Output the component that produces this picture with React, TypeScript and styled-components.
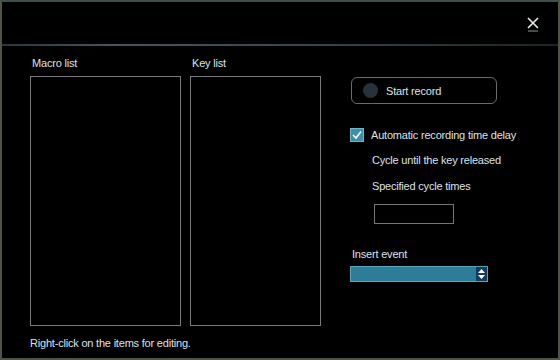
import styled, { createGlobalStyle } from "styled-components";

const GlobalStyle = createGlobalStyle`
  html, body {
    margin: 0;
    padding: 0;
    background: #000;
  }
  body {
    font-family: "Liberation Sans", Arial, sans-serif;
  }
`;

const Window = styled.div`
  box-sizing: border-box;
  width: 560px;
  height: 360px;
  background: #000;
  border: 2px solid #4e5546;
  border-top-color: #3f4c48;
  display: flex;
  flex-direction: column;
  color: #dbe3e8;
  font-size: 11px;
  letter-spacing: -0.2px;
`;

const TitleBar = styled.div`
  height: 42px;
  display: flex;
  justify-content: flex-end;
  align-items: center;
  padding-right: 17px;
  border-bottom: 2px solid transparent;
  border-image: linear-gradient(90deg, #24393c 0%, #3e5a5f 20%, #35494c 55%, #1b2426 100%) 1;
`;

const CloseButton = styled.button`
  width: 16px;
  height: 18px;
  padding: 0;
  border: none;
  background: transparent;
  display: flex;
  align-items: center;
  justify-content: center;
  margin-top: 2px;
`;

const Body = styled.div`
  flex: 1;
  display: flex;
  padding: 11px 0 0 28px;
`;

const Lists = styled.div`
  display: flex;
  flex-direction: column;
`;

const ListRow = styled.div`
  display: flex;
  gap: 9px;
`;

const ListColumn = styled.div<{ $width: number }>`
  display: flex;
  flex-direction: column;
  width: ${(p) => p.$width}px;
`;

const Label = styled.div`
  height: 13px;
  line-height: 13px;
  padding-left: 2px;
  margin-bottom: 6px;
`;

const ListBox = styled.div`
  box-sizing: border-box;
  height: 250px;
  border: 1px solid #7a7a7a;
`;

const Hint = styled.div`
  margin-top: 10px;
  line-height: 14px;
`;

const Side = styled.div`
  display: flex;
  flex-direction: column;
  padding: 20px 0 0 29px;
`;

const RecordButton = styled.button`
  box-sizing: border-box;
  width: 146px;
  height: 27px;
  margin-left: 1px;
  border: 1px solid #6b6b6b;
  border-radius: 6px;
  background: #000;
  display: flex;
  align-items: center;
  gap: 8px;
  padding: 0 0 0 11px;
  color: #dbe3e8;
  font: inherit;
  letter-spacing: inherit;
`;

const Dot = styled.span`
  width: 15px;
  height: 15px;
  border-radius: 50%;
  background: #27333a;
`;

const CheckRow = styled.label`
  display: flex;
  align-items: center;
  gap: 7px;
  margin-top: 24px;
`;

const CheckBox = styled.span`
  box-sizing: border-box;
  width: 14px;
  height: 14px;
  background: #3c8fa6;
  border: 1px solid #6fb6c8;
  display: flex;
  align-items: center;
  justify-content: center;
`;

const Option = styled.div<{ $top: number }>`
  margin-top: ${(p) => p.$top}px;
  padding-left: 22px;
  line-height: 14px;
`;

const CountInput = styled.div`
  box-sizing: border-box;
  width: 80px;
  height: 20px;
  margin: 11px 0 0 24px;
  border: 1px solid #767676;
`;

const SelectLabel = styled.div`
  margin-top: 23px;
  padding-left: 2px;
  line-height: 14px;
`;

const Select = styled.div`
  box-sizing: border-box;
  width: 138px;
  height: 16px;
  margin-top: 5px;
  background: #2e7d98;
  border: 1px solid #5aa3b9;
  display: flex;
  justify-content: flex-end;
`;

const Spinner = styled.span`
  width: 11px;
  height: 14px;
  background: #163a5c;
  display: flex;
  align-items: center;
  justify-content: center;
`;

export default function App() {
  return (
    <>
      <GlobalStyle />
      <Window>
        <TitleBar>
          <CloseButton aria-label="Close">
            <svg width="14" height="16" viewBox="0 0 14 16">
              <path d="M2 2 L12 12 M12 2 L2 12" stroke="#e8eef0" strokeWidth="1.6" />
              <path d="M2 15 H12" stroke="#8a9598" strokeWidth="1" />
            </svg>
          </CloseButton>
        </TitleBar>
        <Body>
          <Lists>
            <ListRow>
              <ListColumn $width={151}>
                <Label>Macro list</Label>
                <ListBox />
              </ListColumn>
              <ListColumn $width={131}>
                <Label>Key list</Label>
                <ListBox />
              </ListColumn>
            </ListRow>
            <Hint>Right-click on the items for editing.</Hint>
          </Lists>
          <Side>
            <RecordButton>
              <Dot />
              Start record
            </RecordButton>
            <CheckRow>
              <CheckBox>
                <svg width="12" height="12" viewBox="0 0 12 12">
                  <path d="M2 6 L5 9 L10 2.5" fill="none" stroke="#fff" strokeWidth="1.6" />
                </svg>
              </CheckBox>
              Automatic recording time delay
            </CheckRow>
            <Option $top={11}>Cycle until the key released</Option>
            <Option $top={12}>Specified cycle times</Option>
            <CountInput />
            <SelectLabel>Insert event</SelectLabel>
            <Select>
              <Spinner>
                <svg width="9" height="12" viewBox="0 0 9 12">
                  <path d="M4.5 1 L8 5 H1 Z M4.5 11 L8 7 H1 Z" fill="#fff" />
                </svg>
              </Spinner>
            </Select>
          </Side>
        </Body>
      </Window>
    </>
  );
}
